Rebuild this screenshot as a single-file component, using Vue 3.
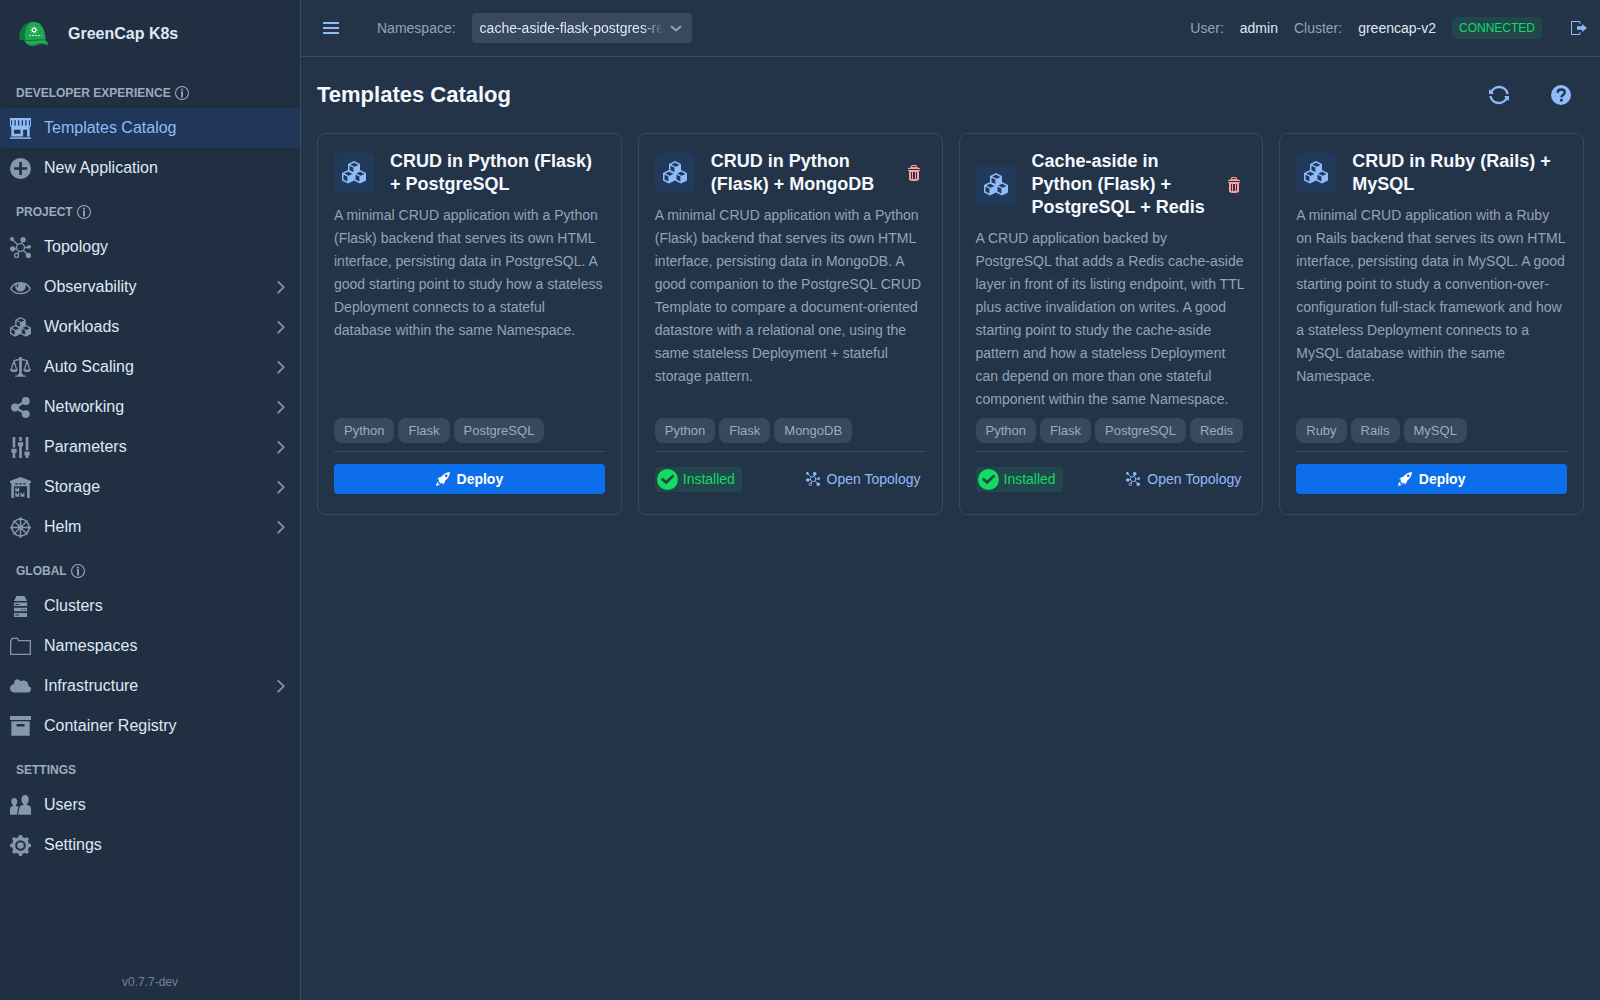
<script setup>
import { h, ref } from 'vue'

/* Glyphs on a 16 x 16 grid, painted with the current text colour. */
const glyphs = {
  shop: '<path fill-rule="evenodd" d="M0 0h16v6l-1 1v7h-2V9h-3v5H1V7L0 6zM.8 1.800v4h.8v-4zM3.400 1.800v4h1v-4zM6.100 1.800v4h1v-4zM8.900 1.800v4h1v-4zM11.600 1.800v4h1v-4zM14.400 1.800v4h.8v-4zM3 9v3h5V9z"/><path d="M0 14.600h16V16H0z" opacity=".8"/>',
  plus: '<path d="M8 0a8 8 0 1 0 0 16A8 8 0 0 0 8 0zm5 9H9v4H7V9H3V7h4V3h2v4h4z"/>',
  cluster: '<g fill="none" stroke="currentColor" stroke-width="1"><circle cx="8" cy="8" r="3"/><circle cx="5" cy="14" r="1.500"/><path d="M1.500 1.500l4.400 4.400M9.800 2l-1 3.200M11 8h3M3 9l2-.5M10.100 10.100L14 14M7 10.900l-1.300 1.900"/></g><circle cx="1.500" cy="1.500" r="1.500"/><circle cx="10" cy="2" r="2"/><circle cx="14.500" cy="7.500" r="1.500"/><circle cx="2" cy="9" r="2"/><circle cx="14" cy="14" r="2"/>',
  eye: '<path fill="none" stroke="currentColor" stroke-width="1" d="M.6 9C2 5.800 4.500 4.400 8 4.400s6 1.400 7.400 4.600c-1.600 2.600-4.200 3.600-7.400 3.600S2.200 11.600.6 9z"/><path fill-rule="evenodd" d="M4.300 5.400C4.100 5.900 4 6.500 4 7a4 4 0 0 0 8 0c0-.6-.1-1.100-.3-1.600C9.500 4.200 6.500 4.200 4.300 5.400zM5.400 5.500l1.100-.2c-.4.800-.5 1.600-.2 2.400l-1.100.2c-.3-.8-.2-1.600.2-2.400z"/>',
  cubes: '<path fill-rule="evenodd" d="M12 6V2L8 0 4 2v4L0 8v5l4 2 4-2 4 2 4-2V8zM8.100 1.100L11 2.600 8.400 3.900 5.500 2.400zM5 3.100l2.600 1.300v3L5 6.200zM4.100 7.100L7 8.600 4.400 9.900 1.500 8.400zM1 9.100l2.600 1.300v3.200L1 12.300zM12.100 7.100L15 8.600l-2.600 1.300-2.900-1.500zM9 9.100l2.600 1.300v3.200L9 12.300z"/>',
  scale: '<path d="M7 0h2v13h1v1h2v1H4v-1h2v-1h1z"/><path d="M8 2C5.500 1.600 4.500 2.500 2.500 3M8 2c2.500-.4 3.500.5 5.500 1M3 3L.8 10M3 3l2.200 7M13 3l-2.200 7M13 3l2.200 7" fill="none" stroke="currentColor" stroke-width="1"/><path d="M0 9.500h6c0 1.200-1.300 2-3 2s-3-.8-3-2zM10 9.500h6c0 1.200-1.300 2-3 2s-3-.8-3-2z"/>',
  share: '<path d="M4 8l8-5M4 8l8 5" stroke="currentColor" stroke-width="1.800"/><circle cx="3.800" cy="8" r="3"/><circle cx="12" cy="3" r="3"/><circle cx="12" cy="13" r="3"/>',
  sliders: '<path d="M2 0h2v8H2zM1 9h4v3H4v4H2v-4H1zM7 0h2v3H7zM6 4h4v3H9v9H7V7H6zM12 0h2v10h-2zM11 11h4v3h-1v2h-2v-2h-1z"/>',
  storage: '<path fill-rule="evenodd" d="M8 0L0 3v1.500h1V16h2V7h10v9h2V4.500h1V3zM4 4.700v1.100h2V4.700zM7 4.700v1.100h2V4.700zM10 4.700v1.100h2V4.700z"/><path d="M4 8h1v1.200h1V8h1v3H4zM4 12h1v1.200h1V12h1v3H4zM8 12h1v1.200h1V12h1v3H8z"/>',
  helm: '<g fill="none" stroke="currentColor"><circle cx="8" cy="8" r="6.500" stroke-width="1.200"/><path stroke-width="1" d="M8 .5v15M.5 8h15M2.700 2.700l10.600 10.600M13.300 2.700L2.700 13.300"/></g><circle cx="8" cy="8" r="1.800"/><circle cx="8" cy="1.100" r=".9"/><circle cx="8" cy="14.900" r=".9"/><circle cx="1.100" cy="8" r=".9"/><circle cx="14.900" cy="8" r=".9"/>',
  server: '<path fill-rule="evenodd" d="M5 0h6l2 3.800H3zM3 5h10v2.600H3zm1 1v.8h3V6zM3 9h10v2.600H3zm6 1v.8h1V10zm2 0v.8h1V10zM3 13h10v3H3zm1 1v.8h3V14z"/>',
  folder: '<path fill="none" stroke="currentColor" d="M.5 14V4l1.200-2.200h4L6.500 3.500h9V14z"/>',
  cloud: '<path d="M14 7.600c.1-.3 0-.6 0-.9C13.700 4.600 12.200 3.500 10.300 3.500c-1 0-1.700.1-2.300.6C7.300 3 6.300 2.300 5 2.600 3.600 2.900 3 4 3.200 6.100 1.300 6.400 0 7.700 0 9.400 0 11.300 1.300 12.500 3.200 12.500h10.300c1.500 0 2.500-1 2.500-2.400 0-1.300-.8-2.300-2-2.500z"/>',
  archive: '<path fill-rule="evenodd" d="M0 0h16v3H0zM1 4h14v11H1zm4 2v2h6V6z"/>',
  users: '<path d="M11.500 0c1.700 0 2.800 1.300 2.800 3.300 0 1.500-.6 3-1.500 3.500v.9c1.900.2 3.200 1 3.200 2.800V15H6.200l.7-4.500c.3-1.800 1.500-2.600 3.400-2.800v-.9C9.300 6.300 8.700 4.800 8.700 3.300 8.700 1.300 9.800 0 11.500 0z"/><path d="M3.300 2.300c1.400 0 2.300 1 2.300 2.600 0 1.100-.5 2.200-1.200 2.700v.7c.8.1 1.500.3 1.900.7L5.300 15H0v-4.500c0-1.300.9-2 2.300-2.200v-.7C1.500 7.100 1 6 1 4.900c0-1.600.9-2.600 2.300-2.600z"/>',
  cog: '<path fill-rule="evenodd" d="M16 9V7l-1.700-.6c-.2-.6-.4-1.200-.7-1.800l.8-1.600L13 1.600l-1.600.8c-.5-.3-1.100-.6-1.800-.7L9 0H7l-.6 1.700c-.6.2-1.200.4-1.800.7L3 1.600 1.600 3l.8 1.600c-.3.5-.6 1.100-.7 1.800L0 7v2l1.700.6c.2.6.4 1.200.7 1.800L1.600 13 3 14.400l1.600-.8c.5.3 1.100.6 1.800.7L7 16h2l.6-1.700c.6-.2 1.200-.4 1.800-.7l1.600.8 1.400-1.400-.8-1.600c.3-.5.6-1.100.7-1.800zM8 12a4 4 0 1 1 0-8 4 4 0 0 1 0 8z"/><circle cx="8" cy="8" r="2.500"/>',
  info: '<circle cx="8" cy="8" r="7.400" fill="none" stroke="currentColor" stroke-width="1.200"/><path d="M7 6h2v7H7zM7 3h2v2H7z"/>',
  chevron: '<path d="M5.500 3.500L10.500 8.200l-5 4.800" fill="none" stroke="currentColor" stroke-width="1.500" stroke-linecap="round" stroke-linejoin="round"/>',
  down: '<path d="M3.500 6.500L8 10.500l4.500-4" fill="none" stroke="currentColor" stroke-width="1.800" stroke-linecap="round" stroke-linejoin="round"/>',
  menu: '<path d="M0 2h16v2H0zM0 7h16v2H0zM0 12h16v2H0z"/>',
  signOut: '<path d="M9 4V1.500H.500v13H9V12" fill="none" stroke="currentColor"/><path d="M16 8l-5-4v2.200H6v3.600h5V12z"/>',
  refresh: '<g fill="none" stroke="currentColor" stroke-width="1.900"><path d="M1.600 6.200A6.900 6.900 0 0 1 14.900 7.200"/><path d="M14.400 9.800A6.900 6.900 0 0 1 1.100 8.800"/></g><path d="M0 3.200V7.200h4zM16 12.800V8.800h-4z"/>',
  question: '<circle cx="8" cy="8" r="8"/><path d="M5.300 6.200c0-3.600 5.700-3.300 5.700-.3 0 2-2.600 1.900-2.600 4" fill="none" stroke="#233348" stroke-width="1.900"/><path d="M7.200 11.200h2.200v2H7.200z" fill="#233348"/>',
  trash: '<path fill-rule="evenodd" d="M13 3s0-.5-2-.8v-.7C11 .7 10.300 0 9.500 0h-3C5.700 0 5 .7 5 1.500v.7c-.8.100-1.500.4-2 .8H2v1h12V3zM6 1.500c0-.3.200-.5.500-.5h3c.3 0 .5.2.5.5v.6c-1-.1-3-.1-4 0zM2 5v1h1v9c1.200.6 2.700 1 4.200 1h1.600c1.500 0 3-.4 4.200-1V6h1V5zm4 8.900l-1-.2V7h1zM9 14H7V7h2zm2-.3l-1 .2V7h1z"/>',
  rocket: '<path fill-rule="evenodd" d="M16 0c-4.200.2-7.600 2.400-9.900 5.500L3.300 6.300 1.500 9l2.300-.6-.9 2.300 2.400 2.400 2.300-.9-.6 2.300 2.700-1.800.8-2.800C13.600 7.600 15.800 4.200 16 0zM11.700 5.900a1.500 1.500 0 1 1 0-3.100 1.500 1.500 0 0 1 0 3.100z"/><path d="M2.200 11.500C.8 12 .5 13.600 0 16c2.400-.5 4-.8 4.500-2.200l-.9-.2-1.200.8.400-1.700z"/>',
  check: '<path fill-rule="evenodd" d="M8 0a8 8 0 1 0 0 16A8 8 0 0 0 8 0zM7 11.700L2.900 8.100l1.300-1.600L7 8.800l4.900-4.600 1.400 1.400z"/>',
}

const Icon = (props) =>
  h('svg', {
    viewBox: '0 0 16 16',
    width: props.size,
    height: props.size,
    fill: 'currentColor',
    'aria-hidden': 'true',
    innerHTML: glyphs[props.name],
  })
Icon.props = ['name', 'size']

const sections = [
  {
    label: 'DEVELOPER EXPERIENCE',
    info: true,
    items: [
      { label: 'Templates Catalog', icon: 'shop', active: true },
      { label: 'New Application', icon: 'plus' },
    ],
  },
  {
    label: 'PROJECT',
    info: true,
    items: [
      { label: 'Topology', icon: 'cluster' },
      { label: 'Observability', icon: 'eye', expandable: true },
      { label: 'Workloads', icon: 'cubes', expandable: true },
      { label: 'Auto Scaling', icon: 'scale', expandable: true },
      { label: 'Networking', icon: 'share', expandable: true },
      { label: 'Parameters', icon: 'sliders', expandable: true },
      { label: 'Storage', icon: 'storage', expandable: true },
      { label: 'Helm', icon: 'helm', expandable: true },
    ],
  },
  {
    label: 'GLOBAL',
    info: true,
    items: [
      { label: 'Clusters', icon: 'server' },
      { label: 'Namespaces', icon: 'folder' },
      { label: 'Infrastructure', icon: 'cloud', expandable: true },
      { label: 'Container Registry', icon: 'archive' },
    ],
  },
  {
    label: 'SETTINGS',
    items: [
      { label: 'Users', icon: 'users' },
      { label: 'Settings', icon: 'cog' },
    ],
  },
]

const templates = [
  {
    title: 'CRUD in Python (Flask) + PostgreSQL',
    text: 'A minimal CRUD application with a Python (Flask) backend that serves its own HTML interface, persisting data in PostgreSQL. A good starting point to study how a stateless Deployment connects to a stateful database within the same Namespace.',
    tags: ['Python', 'Flask', 'PostgreSQL'],
    installed: false,
  },
  {
    title: 'CRUD in Python (Flask) + MongoDB',
    text: 'A minimal CRUD application with a Python (Flask) backend that serves its own HTML interface, persisting data in MongoDB. A good companion to the PostgreSQL CRUD Template to compare a document-oriented datastore with a relational one, using the same stateless Deployment + stateful storage pattern.',
    tags: ['Python', 'Flask', 'MongoDB'],
    installed: true,
  },
  {
    title: 'Cache-aside in Python (Flask) + PostgreSQL + Redis',
    text: 'A CRUD application backed by PostgreSQL that adds a Redis cache-aside layer in front of its listing endpoint, with TTL plus active invalidation on writes. A good starting point to study the cache-aside pattern and how a stateless Deployment can depend on more than one stateful component within the same Namespace.',
    tags: ['Python', 'Flask', 'PostgreSQL', 'Redis'],
    installed: true,
  },
  {
    title: 'CRUD in Ruby (Rails) + MySQL',
    text: 'A minimal CRUD application with a Ruby on Rails backend that serves its own HTML interface, persisting data in MySQL. A good starting point to study a convention-over-configuration full-stack framework and how a stateless Deployment connects to a MySQL database within the same Namespace.',
    tags: ['Ruby', 'Rails', 'MySQL'],
    installed: false,
  },
]

const namespace = ref('cache-aside-flask-postgres-redis')
</script>

<template>
  <div class="app">
    <aside class="sidebar">
      <div class="brand">
        <svg class="logo" viewBox="0 0 30 26" aria-hidden="true">
          <path d="M0.500 19C-.5 9 4 2 13 1l8 1 5 17z" fill="#0b7a3c" />
          <path d="M6 19C5 9 8 1.500 14 .8c7 0 12 5 12.500 18z" fill="#1fa653" />
          <path d="M5 19c8 1.500 14-.5 21 0 2 1.500 3.500 4 3.500 5.500-5-2-9-1.500-12.500 0-5 2-10-1-12-5.500z" fill="#23ad58" />
          <path d="M5 19.300c8 1.200 14-1 21-.3M7 22c3 3 7 3 10 1.500s8-1.500 12 .5" fill="none" stroke="#0b7a3c" />
          <g stroke="#eafff2" fill="none">
            <circle cx="15" cy="9" r="1.800" />
            <path d="M15 5.500v7M11.500 9h7M12.500 6.500l5 5M17.500 6.500l-5 5" stroke-dasharray="2 3" />
            <path d="M10 14.500h12.500" stroke-dasharray="2 1" opacity=".8" />
          </g>
        </svg>
        <span>GreenCap K8s</span>
      </div>

      <nav class="nav" aria-label="Main">
        <section v-for="section in sections" :key="section.label">
          <h2 class="section-title">
            {{ section.label }}
            <Icon v-if="section.info" name="info" size="14" />
          </h2>
          <a
            v-for="item in section.items"
            :key="item.label"
            href="#"
            class="nav-item"
            :class="{ active: item.active }"
          >
            <Icon class="nav-icon" :name="item.icon" size="21" />
            <span class="nav-label">{{ item.label }}</span>
            <Icon v-if="item.expandable" class="nav-arrow" name="chevron" size="18" />
          </a>
        </section>
      </nav>

      <footer class="version">v0.7.7-dev</footer>
    </aside>

    <div class="page">
      <header class="topbar">
        <button class="icon-button menu-button" type="button" aria-label="Toggle menu">
          <Icon name="menu" size="16" />
        </button>
        <label class="muted" for="namespace">Namespace:</label>
        <div class="select-box">
          <select id="namespace" v-model="namespace">
            <option>cache-aside-flask-postgres-redis</option>
          </select>
          <Icon name="down" size="16" />
        </div>
        <div class="session">
          <span class="muted">User:</span>
          <span>admin</span>
          <span class="muted">Cluster:</span>
          <span>greencap-v2</span>
          <span class="status">CONNECTED</span>
          <button class="icon-button logout-button" type="button" aria-label="Log out">
            <Icon name="signOut" size="16" />
          </button>
        </div>
      </header>

      <main class="content">
        <div class="heading">
          <h1>Templates Catalog</h1>
          <button class="icon-button action-button" type="button" aria-label="Refresh">
            <Icon name="refresh" size="20" />
          </button>
          <button class="icon-button action-button" type="button" aria-label="Help">
            <Icon name="question" size="20" />
          </button>
        </div>

        <div class="cards">
          <article v-for="item in templates" :key="item.title" class="card">
            <div class="card-head">
              <span class="card-icon"><Icon name="cubes" size="24" /></span>
              <h3>{{ item.title }}</h3>
              <button v-if="item.installed" class="icon-button trash-button" type="button" aria-label="Delete">
                <Icon name="trash" size="16" />
              </button>
            </div>
            <p>{{ item.text }}</p>
            <div class="tags">
              <span v-for="tag in item.tags" :key="tag" class="tag">{{ tag }}</span>
            </div>
            <div class="card-foot">
              <template v-if="item.installed">
                <span class="installed"><Icon name="check" size="21" />Installed</span>
                <button class="topology" type="button"><Icon name="cluster" size="14" />Open Topology</button>
              </template>
              <button v-else class="deploy" type="button"><Icon name="rocket" size="14" />Deploy</button>
            </div>
          </article>
        </div>
      </main>
    </div>
  </div>
</template>

<style>
body {
  margin: 0;
  background: #233348;
}
</style>

<style scoped>
* {
  box-sizing: border-box;
}

.app {
  display: flex;
  min-height: 100vh;
  color: #dfe8f4;
  background: #233348;
  font: 14px/20px "Liberation Sans", Arial, sans-serif;
}

svg {
  display: block;
  flex: none;
}

button {
  padding: 0;
  border: 0;
  background: none;
  font: inherit;
  cursor: pointer;
}

.sidebar {
  display: flex;
  flex: none;
  flex-direction: column;
  width: 301px;
  border-right: 1px solid #394a62;
  background: #212f42;
}

.brand {
  display: flex;
  align-items: center;
  gap: 19px;
  height: 69px;
  padding: 0 19px 2px;
  font-size: 16px;
  font-weight: 700;
}

.logo {
  width: 30px;
  height: 26px;
}

.section-title {
  display: flex;
  align-items: center;
  gap: 4px;
  height: 39px;
  margin: 0;
  padding: 14px 16px 5px;
  color: #9dabbf;
  font-size: 12px;
  line-height: 20px;
}

.nav-item {
  display: flex;
  align-items: center;
  height: 40px;
  padding: 0 10px;
  border-radius: 4px;
  color: #dfe8f4;
  font-size: 16px;
  text-decoration: none;
}

.nav-icon {
  margin-right: 13px;
  color: #8696ae;
}

.nav-label {
  flex: 1;
}

.nav-arrow {
  color: #8696ae;
}

.nav-item.active {
  background: #20375a;
  color: #90bbf9;
}

.nav-item.active .nav-icon {
  color: #90bbf9;
}

.version {
  margin-top: auto;
  padding: 8px;
  color: #74839a;
  font-size: 12px;
  text-align: center;
}

.page {
  flex: 1;
  min-width: 0;
}

.topbar {
  display: flex;
  align-items: center;
  height: 57px;
  padding: 0 13px 0 22px;
  border-bottom: 1px solid #394a62;
}

.icon-button {
  display: flex;
  align-items: center;
  justify-content: center;
  color: #90bbf9;
}

.menu-button {
  margin-right: 38px;
}

.muted {
  color: #94a3b8;
}

.select-box {
  display: grid;
  align-items: center;
  width: 220px;
  height: 30px;
  margin-left: 16px;
  border-radius: 4px;
  background: #38485f;
  color: #94a3b8;
}

.select-box > * {
  grid-area: 1 / 1;
}

.select-box svg {
  justify-self: end;
  margin-right: 8px;
  pointer-events: none;
}

.select-box select {
  width: 100%;
  height: 100%;
  padding: 0 30px 0 8px;
  border: 0;
  background: none;
  color: #dfe8f4;
  font: inherit;
  appearance: none;
  mask-image: linear-gradient(to left, transparent 28px, #000 50px);
}

.session {
  display: flex;
  align-items: center;
  gap: 16px;
  margin-left: auto;
}

.status {
  padding: 1px 7px;
  border-radius: 4px;
  background: #21464c;
  color: #12dc63;
  font-size: 12px;
}

.logout-button {
  margin-left: 13px;
}

.content {
  padding: 16px;
}

.heading {
  display: flex;
  align-items: center;
  gap: 16px;
  height: 44px;
  margin-bottom: 16px;
}

.heading h1 {
  flex: 1;
  margin: 0;
  color: #f5f9ff;
  font-size: 22px;
  line-height: 28px;
}

.action-button {
  width: 46px;
  height: 44px;
}

.cards {
  display: grid;
  grid-template-columns: repeat(auto-fill, minmax(280px, 1fr));
  gap: 16px;
}

.card {
  display: flex;
  flex-direction: column;
  padding: 16px;
  border: 1px solid #36475e;
  border-radius: 8px;
}

.card-head {
  display: flex;
  align-items: center;
}

.card-icon {
  display: flex;
  flex: none;
  align-items: center;
  justify-content: center;
  width: 40px;
  height: 40px;
  margin-right: 16px;
  border-radius: 4px;
  background: #213a5c;
  color: #90bbf9;
}

.card h3 {
  flex: 1;
  margin: 0;
  color: #f5f9ff;
  font-size: 18px;
  line-height: 23px;
}

.trash-button {
  flex: none;
  width: 24px;
  height: 30px;
  margin-left: 8px;
  color: #ff9f99;
}

.card p {
  flex: 1;
  margin: 8px 0 7px;
  color: #94a3b8;
  line-height: 23px;
}

.tags {
  display: flex;
  flex-wrap: wrap;
  gap: 4px;
  padding-bottom: 8px;
  border-bottom: 1px solid #394a62;
}

.tag {
  padding: 0 10px;
  border-radius: 8px;
  background: #38485f;
  color: #9dabbf;
  font-size: 13px;
  line-height: 25px;
}

.card-foot {
  display: flex;
  align-items: center;
  justify-content: space-between;
  height: 30px;
  margin: 12px 0 4px;
}

.installed {
  display: flex;
  align-items: center;
  gap: 5px;
  height: 25px;
  padding: 0 7px 0 2px;
  border-radius: 4px;
  background: #21464c;
  color: #12dc63;
}

.topology {
  display: flex;
  align-items: center;
  gap: 7px;
  height: 30px;
  padding-right: 5px;
  color: #90bbf9;
}

.deploy {
  display: flex;
  flex: 1;
  align-items: center;
  justify-content: center;
  gap: 7px;
  height: 30px;
  border-radius: 4px;
  background: #0d6eec;
  color: #fff;
  font-weight: 700;
}
</style>
